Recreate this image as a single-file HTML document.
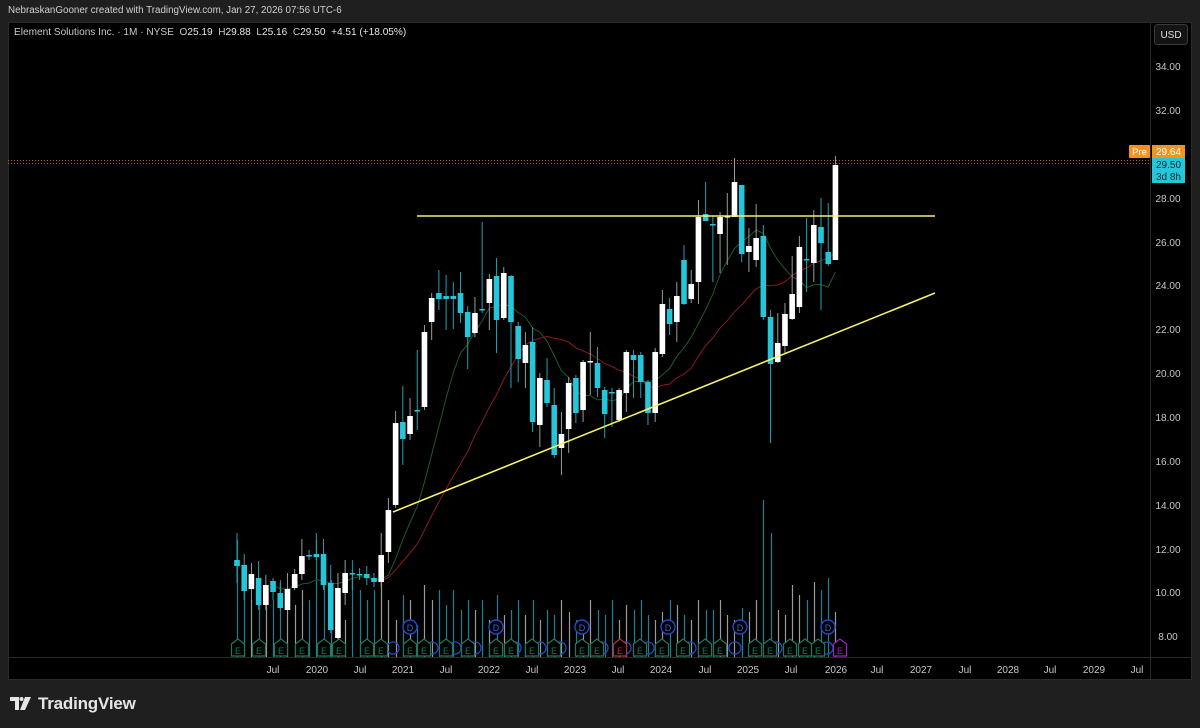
<!DOCTYPE html>
<html><head><meta charset="utf-8">
<style>
html,body{margin:0;padding:0;background:#1f1f1f;width:1200px;height:728px;overflow:hidden;font-family:"Liberation Sans",sans-serif;}
#hdr{position:absolute;left:8px;top:5px;font-size:9.8px;color:#d0d0d0;}
#panel{position:absolute;left:8px;top:22px;width:1184px;height:658px;background:#000;border:1px solid #2a2a2a;box-sizing:border-box;}
#legend{position:absolute;left:14px;top:27px;font-size:10.1px;color:#c8c8c8;white-space:nowrap;}
#legend b{font-weight:normal;color:#e8e8e8;}
#foot{position:absolute;left:38px;top:694px;font-size:17px;font-weight:bold;color:#e6e6e6;letter-spacing:-0.2px;}
svg{position:absolute;left:0;top:0;}
</style></head><body>
<div id="hdr">NebraskanGooner created with TradingView.com, Jan 27, 2026 07:56 UTC-6</div>
<div id="panel"></div>
<svg id="s" width="1200" height="728" xmlns="http://www.w3.org/2000/svg" font-family="Liberation Sans, sans-serif">
<line x1="1150.5" y1="22" x2="1150.5" y2="680" stroke="#2a2a2a"/>
<line x1="8" y1="657.5" x2="1192" y2="657.5" stroke="#2a2a2a"/>
<rect x="1154.5" y="24.5" width="33" height="20" rx="3" fill="#141414" stroke="#3a3a3a"/>
<text x="1171" y="38" font-size="10" fill="#e0e0e0" text-anchor="middle">USD</text>
<g font-size="10" fill="#c8c8c8" text-anchor="middle">
<text x="1168" y="70">34.00</text><text x="1168" y="114">32.00</text><text x="1168" y="202">28.00</text>
<text x="1168" y="246">26.00</text><text x="1168" y="289">24.00</text><text x="1168" y="333">22.00</text>
<text x="1168" y="377">20.00</text><text x="1168" y="421">18.00</text><text x="1168" y="465">16.00</text>
<text x="1168" y="509">14.00</text><text x="1168" y="553">12.00</text><text x="1168" y="596">10.00</text>
<text x="1168" y="640">8.00</text>
</g>
<g font-size="10" fill="#c8c8c8" text-anchor="middle">
<text x="273" y="673">Jul</text><text x="317" y="673">2020</text><text x="360" y="673">Jul</text>
<text x="403" y="673">2021</text><text x="446" y="673">Jul</text><text x="489" y="673">2022</text>
<text x="532" y="673">Jul</text><text x="575" y="673">2023</text><text x="618" y="673">Jul</text>
<text x="661" y="673">2024</text><text x="705" y="673">Jul</text><text x="748" y="673">2025</text>
<text x="791" y="673">Jul</text><text x="836" y="673">2026</text><text x="877" y="673">Jul</text>
<text x="921" y="673">2027</text><text x="965" y="673">Jul</text><text x="1008" y="673">2028</text>
<text x="1050" y="673">Jul</text><text x="1094" y="673">2029</text><text x="1137" y="673">Jul</text>
</g>
<g id="chart"></g>
<line x1="8" y1="160.5" x2="1150" y2="160.5" stroke="#f7931a" stroke-dasharray="1 2" opacity="0.7"/>
<line x1="8" y1="163.5" x2="1150" y2="163.5" stroke="#26c6da" stroke-dasharray="1 2" opacity="0.7"/>
<line x1="417" y1="216" x2="935" y2="216" stroke="#f5f06a" stroke-width="1.6"/>
<line x1="393" y1="512" x2="935" y2="293" stroke="#f5f06a" stroke-width="1.6"/>
<rect x="1129" y="145" width="21" height="13" rx="1" fill="#f7931a"/>
<text x="1139.5" y="155" font-size="9.5" fill="#fff" text-anchor="middle">Pre</text>
<rect x="1152" y="145" width="33" height="13" fill="#f7931a"/>
<text x="1168.5" y="155" font-size="10" fill="#fff" text-anchor="middle">29.64</text>
<rect x="1152" y="158" width="33" height="25" fill="#26c6da"/>
<text x="1168.5" y="168" font-size="10" fill="#0a2a30" text-anchor="middle">29.50</text>
<text x="1168.5" y="180" font-size="10" fill="#0a2a30" text-anchor="middle">3d 8h</text>
<g transform="translate(10,697)" fill="#e6e6e6">
<path d="M0 0H9V13H5V4H0Z"/><circle cx="11.5" cy="2" r="2"/><path d="M15 0H21L15 13H10Z"/>
</g>
</svg>
<div id="legend">Element Solutions Inc. · 1M · NYSE &nbsp;O<b>25.19</b> &nbsp;H<b>29.88</b> &nbsp;L<b>25.16</b> &nbsp;C<b>29.50</b> &nbsp;<b>+4.51 (+18.05%)</b></div>
<div id="foot">TradingView</div>
<script>
var D=[[560,566,533,583,'c'],[565,591,554,600,'c'],[574,589,563,600,'w'],[578,605,561,610,'c'],[585,605,575,610,'w'],[581,592,578,600,'c'],[593,608,583,610,'c'],[589,610,573,612,'w'],[574,588,569,590,'w'],[556,574,539,580,'w'],[555,556,550,560,'c'],[554,557,533,560,'c'],[554,585,539,590,'c'],[583,630,565,633,'c'],[588,638,573,640,'w'],[573,593,560,605,'w'],[573,574,570,590,'c'],[574,575,568,580,'c'],[574,578,566,585,'c'],[578,582,573,587,'c'],[555,582,533,587,'w'],[510,552,498,563,'w'],[423,505,411,508,'w'],[422,439,386,465,'c'],[416,434,398,440,'w'],[410,411,350,430,'c'],[332,407,325,410,'w'],[298,322,293,340,'w'],[293,299,270,310,'c'],[296,299,275,330,'c'],[296,299,282,329,'c'],[293,313,272,323,'c'],[312,337,306,369,'c'],[313,333,297,337,'w'],[309,310,222,313,'c'],[279,303,274,330,'w'],[276,320,258,353,'c'],[273,318,267,320,'w'],[276,322,275,388,'c'],[326,359,322,382,'c'],[345,363,332,388,'w'],[342,422,327,432,'c'],[378,425,373,447,'w'],[380,403,358,407,'c'],[405,455,388,458,'c'],[434,448,412,475,'w'],[383,429,377,453,'w'],[378,413,375,423,'c'],[362,410,360,422,'w'],[361,362,332,395,'w'],[363,388,347,397,'c'],[390,414,387,438,'c'],[392,393,388,427,'c'],[390,420,388,422,'w'],[352,393,350,412,'w'],[355,360,350,398,'c'],[355,382,352,398,'c'],[382,413,380,425,'c'],[352,413,348,422,'w'],[304,354,290,357,'w'],[309,324,298,335,'c'],[296,322,282,342,'w'],[260,304,245,305,'c'],[284,299,270,303,'w'],[217,282,200,304,'w'],[214,221,182,220,'c'],[224,225,216,282,'c'],[217,234,212,273,'w'],[216,217,193,265,'w'],[182,217,158,217,'w'],[185,254,185,262,'c'],[246,252,228,272,'w'],[238,260,204,267,'w'],[236,317,225,320,'c'],[317,364,310,443,'c'],[343,362,313,363,'w'],[314,346,303,353,'w'],[294,319,256,320,'w'],[247,307,236,313,'w'],[259,260,218,292,'c'],[225,263,210,282,'w'],[227,243,198,310,'c'],[252,264,203,266,'c'],[165,260,156,260,'w']];
var NS='http://www.w3.org/2000/svg',g=document.getElementById('chart');
function el(t,a){var e=document.createElementNS(NS,t);for(var k in a)e.setAttribute(k,a[k]);g.appendChild(e);return e;}
function X(i){return 237+i*7.21;}
var vol=[540,590,600,585,590,600,580,610,605,590,600,540,560,580,610,620,560,590,600,590,580,600,620,595,600,625,585,600,590,605,590,610,600,610,600,620,595,615,610,600,615,600,620,610,615,600,612,620,625,600,610,615,600,620,605,610,600,615,620,612,600,605,615,620,600,610,610,600,615,620,608,612,600,500,533,610,615,585,595,600,582,590,578,612];
D.forEach(function(d,i){var x=Math.round(X(i));var c=d[4]=='c';
 el('line',{x1:x+.5,y1:vol[i],x2:x+.5,y2:657,stroke:c?'#1f7f8e':'#9a9a9a','stroke-width':1.2});});
var cl=D.map(function(d){return d[4]=='c'?d[1]:d[0];});
function ma(n,col,st){var p=[];for(var i=st;i<cl.length;i++){var s=0,m=Math.min(n,i+1);for(var j=0;j<m;j++)s+=cl[i-j];p.push(X(i).toFixed(1)+','+(s/m).toFixed(1));}
 el('polyline',{points:p.join(' '),fill:'none',stroke:col,'stroke-width':1});}
ma(10,'#1d5a2a',5);ma(20,'#8a1a22',20);
D.forEach(function(d,i){var x=X(i),c=d[4]=='c';var col=c?'#26c6da':'#ffffff';
 el('line',{x1:x,y1:d[2],x2:x,y2:d[3],stroke:c?'#26a0b0':'#9a9a9a','stroke-width':1});
 el('rect',{x:x-2.8,y:d[0],width:5.6,height:Math.max(1.5,d[1]-d[0]),fill:col});});
var E=[238,259,281,302,324,339,367,381,410,424,446,468,496,511,532,554,582,597,620,640,662,683,705,720,755,770,790,805,818,840];
[393,432,455,475,515,540,560,602,625,648,690,735,776,827].forEach(function(x){el('circle',{cx:x,cy:648,r:6,fill:'none',stroke:'#2448c8','stroke-width':1.3});});
E.forEach(function(x){var col=x==620?'#c03030':(x==840?'#a020c0':'#1e7a5a');
 el('path',{d:'M'+(x-6.5)+' 644 L'+x+' 639 L'+(x+6.5)+' 644 V656 H'+(x-6.5)+'Z',fill:'#000',stroke:col,'stroke-width':1.2});
 var t=el('text',{x:x,y:654,'font-size':9,fill:col,'text-anchor':'middle'});t.textContent='E';});
[410,496,582,668,740,828].forEach(function(x){el('circle',{cx:x,cy:627,r:7,fill:'#000',stroke:'#2448c8','stroke-width':1.4});
 var t=el('text',{x:x,y:631,'font-size':9,fill:'#3a60e0','text-anchor':'middle'});t.textContent='D';});
</script>
</body></html>
